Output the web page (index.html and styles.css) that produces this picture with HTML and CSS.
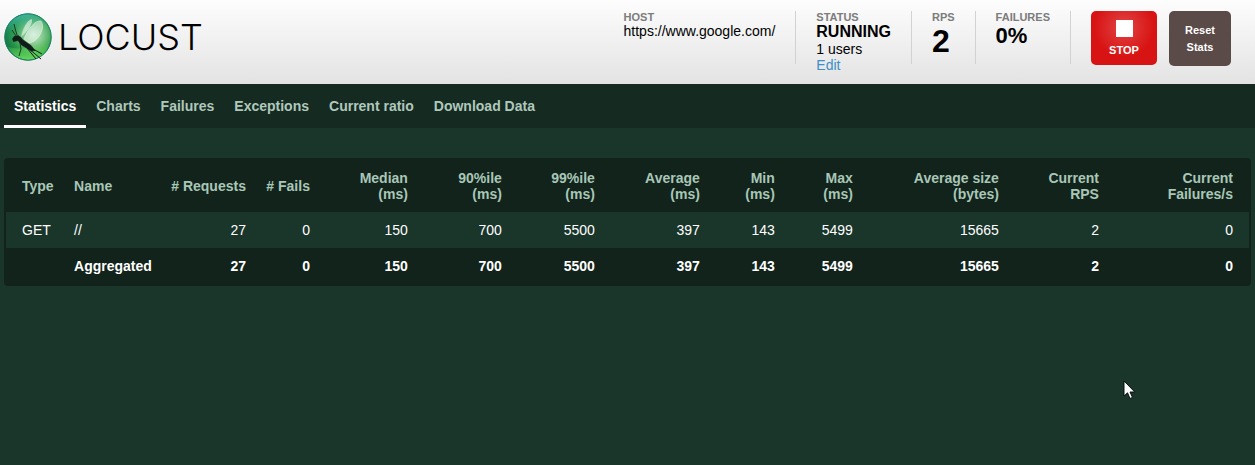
FILE: index.html
```html
<!DOCTYPE html>
<html lang="en">
<head>
<meta charset="utf-8">
<title>Locust</title>
<link rel="stylesheet" href="styles.css">
</head>
<body>
<header class="top">
  <div class="brand">
    <svg class="emblem" width="48" height="48" viewBox="0 0 48 48" aria-hidden="true">
      <defs>
        <radialGradient id="ball" cx="62%" cy="45%" r="60%">
          <stop offset="0" stop-color="#e2f5de"/>
          <stop offset=".35" stop-color="#8fce8c"/>
          <stop offset=".7" stop-color="#2f9c42"/>
          <stop offset="1" stop-color="#107238"/>
        </radialGradient>
        <linearGradient id="sky" x1="0" y1="0" x2=".25" y2="1">
          <stop offset="0" stop-color="#4cc4c4"/>
          <stop offset=".4" stop-color="#30a68c" stop-opacity=".25"/>
          <stop offset="1" stop-color="#30a68c" stop-opacity="0"/>
        </linearGradient>
        <linearGradient id="glow" x1="0" y1="0" x2="0" y2="1">
          <stop offset="0" stop-color="#60dd55" stop-opacity="0"/>
          <stop offset="1" stop-color="#7df06a" stop-opacity=".8"/>
        </linearGradient>
      </defs>
      <circle cx="24" cy="24" r="23.5" fill="url(#ball)"/>
      <circle cx="24" cy="24" r="23.5" fill="url(#sky)"/>
      <path d="M4 34Q24 39 45 28Q44 46 24 47Q9 46 4 34Z" fill="url(#glow)"/>
      <circle cx="24" cy="24" r="23.200" fill="none" stroke="#1b7f68" stroke-width="1"/>
      <path d="M17 24C19 15 23 7 28 6C29 11 23 19 17 24Z" fill="#eefaee" fill-opacity=".6"/>
      <path d="M20 26C24 16 31 7 37 8C42 15 34 29 25 30Z" fill="#f0faf0" fill-opacity=".5" stroke="#f2fbf0" stroke-width=".5"/>
      <path d="M8.500 26L10 23.500L14 22.500L17 24.500L19 27L27 32.500L31 37.500L27.500 38L17.500 32L14 27.500L9.500 28.500Z" fill="#101d18" stroke="#101d18" stroke-width=".6" stroke-linejoin="round"/>
      <path d="M12 23L8 17M13 22L11.500 17L10 11M16 30L17 36L15 43" fill="none" stroke="#101d18" stroke-width=".8"/>
      <path d="M24 35L37 46M29 36L38 41M23 35L32 46" fill="none" stroke="#101d18" stroke-width="1"/>
    </svg>
    <span class="wordmark">LOCUST</span>
  </div>
  <div class="boxes">
    <div class="box">
      <div class="label">HOST</div>
      <div class="value">https://www.google.com/</div>
    </div>
    <div class="box">
      <div class="label">STATUS</div>
      <div class="value state">RUNNING</div>
      <div class="value users">1 users</div>
      <a class="edit" href="#">Edit</a>
    </div>
    <div class="box">
      <div class="label">RPS</div>
      <div class="value rps">2</div>
    </div>
    <div class="box">
      <div class="label">FAILURES</div>
      <div class="value fails">0%</div>
    </div>
    <div class="actions">
      <button class="stop" type="button"><span class="square"></span>STOP</button>
      <button class="reset" type="button">Reset<br>Stats</button>
    </div>
  </div>
</header>
<nav class="tabs">
  <a class="tab active" href="#">Statistics</a>
  <a class="tab" href="#">Charts</a>
  <a class="tab" href="#">Failures</a>
  <a class="tab" href="#">Exceptions</a>
  <a class="tab" href="#">Current ratio</a>
  <a class="tab" href="#">Download Data</a>
</nav>
<main class="content">
  <div class="panel">
    <table class="stats">
      <colgroup>
        <col class="c-type"><col class="c-name"><col class="c-req"><col class="c-fail"><col class="c-med"><col class="c-90"><col class="c-99"><col class="c-avg"><col class="c-min"><col class="c-max"><col class="c-size"><col class="c-rps"><col class="c-fps">
      </colgroup>
      <thead>
        <tr><th class="text">Type</th><th class="text">Name</th><th># Requests</th><th># Fails</th><th>Median<br>(ms)</th><th>90%ile<br>(ms)</th><th>99%ile<br>(ms)</th><th>Average<br>(ms)</th><th>Min<br>(ms)</th><th>Max<br>(ms)</th><th>Average size<br>(bytes)</th><th>Current<br>RPS</th><th>Current<br>Failures/s</th></tr>
      </thead>
      <tbody>
        <tr><td class="text">GET</td><td class="text">//</td><td>27</td><td>0</td><td>150</td><td>700</td><td>5500</td><td>397</td><td>143</td><td>5499</td><td>15665</td><td>2</td><td>0</td></tr>
        <tr class="total"><td class="text"></td><td class="text">Aggregated</td><td>27</td><td>0</td><td>150</td><td>700</td><td>5500</td><td>397</td><td>143</td><td>5499</td><td>15665</td><td>2</td><td>0</td></tr>
      </tbody>
    </table>
  </div>
</main>
<svg class="pointer" width="13" height="20" viewBox="0 0 13 20" aria-hidden="true">
  <path d="M1 1V16L4.5 12.800L7 18.500L9.500 17.400L7 12H11.800Z" fill="#fff" stroke="#0a0f14" stroke-width="1"/>
</svg>
</body>
</html>
```
FILE: styles.css
```css
* {
  box-sizing: border-box;
}

body {
  margin: 0;
  min-height: 100vh;
  background: #1a352a;
  color: #fff;
  font: 14px/16px "Liberation Sans", Arial, sans-serif;
}

a {
  text-decoration: none;
}

.top {
  display: flex;
  justify-content: space-between;
  align-items: flex-start;
  height: 84px;
  padding: 11px 24px 0 4px;
  background: linear-gradient(#fdfdfd, #e3e3e3);
  color: #000;
}

.brand {
  display: flex;
  align-items: center;
  gap: 6px;
  padding-top: 2px;
}

.wordmark {
  font: 300 36px/48px Inter, Lato, sans-serif;
}

.boxes {
  display: flex;
}

.box {
  height: 53px;
  padding-right: 20px;
  margin-right: 20px;
  border-right: 1px solid #d2d2d2;
  white-space: nowrap;
}

.label {
  color: #7c7c7c;
  font-size: 11px;
  font-weight: bold;
  line-height: 12px;
}

.state {
  font-size: 16px;
  font-weight: bold;
  line-height: 18px;
}

.users {
  line-height: 16px;
}

.edit {
  display: block;
  color: #3d8fc6;
}

.rps {
  font-size: 32px;
  font-weight: bold;
  line-height: 36px;
}

.fails {
  font-size: 22px;
  font-weight: bold;
  line-height: 26px;
}

.actions {
  display: flex;
  align-items: flex-start;
  gap: 12px;
}

.stop,
.reset {
  padding: 0;
  border: 0;
  border-radius: 5px;
  color: #fff;
  font: bold 11px/17px "Liberation Sans", Arial, sans-serif;
}

.stop {
  display: flex;
  flex-direction: column;
  align-items: center;
  gap: 5px;
  width: 66px;
  height: 54px;
  padding-top: 9px;
  background: radial-gradient(circle at 50% 30%, #e14545, #d81313 30px);
}

.square {
  width: 17px;
  height: 17px;
  background: #fff;
}

.reset {
  width: 62px;
  height: 55px;
  background: #5a4a48;
}

.tabs {
  display: flex;
  padding-left: 4px;
  background: #152a21;
}

.tab {
  padding: 14px 10px 11px;
  border-bottom: 3px solid transparent;
  color: #b0c8bc;
  font-weight: bold;
}

.active {
  border-color: #fff;
  color: #fff;
}

.content {
  padding: 30px 4px;
}

.panel {
  padding: 2px;
  border-radius: 4px;
  background: #12231b;
}

.stats {
  width: 100%;
  table-layout: fixed;
  border-collapse: collapse;
}

.stats th,
.stats td {
  padding: 10px;
  text-align: right;
  white-space: nowrap;
}

.stats th {
  color: #a9c7b7;
}

.stats .text {
  text-align: left;
}

.stats th:first-child,
.stats td:first-child {
  padding-left: 16px;
}

.stats th:last-child,
.stats td:last-child {
  padding-right: 16px;
}

.stats tbody tr {
  background: #1a352a;
}

.stats tbody .total {
  background: none;
  font-weight: bold;
}

.c-type { width: 4.67%; }
.c-name { width: 7.8%; }
.c-req { width: 7.64%; }
.c-fail { width: 5.15%; }
.c-med { width: 7.88%; }
.c-90 { width: 7.56%; }
.c-99 { width: 7.48%; }
.c-avg { width: 8.45%; }
.c-min { width: 6.03%; }
.c-max { width: 6.28%; }
.c-size { width: 11.75%; }
.c-rps { width: 8.05%; }
.c-fps { width: 11.26%; }

.pointer {
  position: absolute;
  left: 1123px;
  top: 380px;
}
```
